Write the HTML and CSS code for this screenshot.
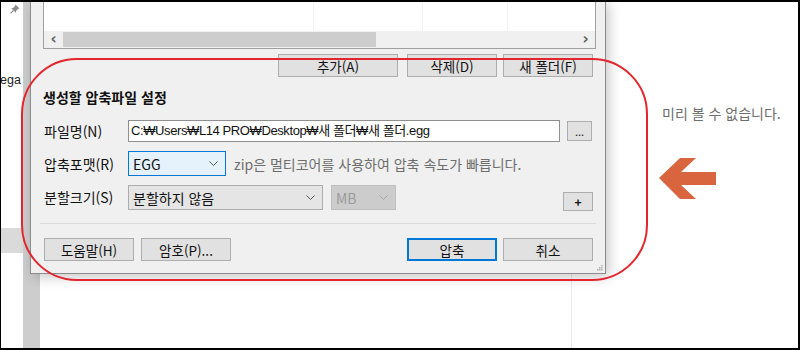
FILE: index.html
```html
<!DOCTYPE html>
<html lang="ko">
<head>
    <meta charset="UTF-8">
    <meta name="viewport" content="width=device-width, initial-scale=1.0">
    <title>압축파일 설정</title>
    <link rel="stylesheet" href="styles.css">
</head>
<body>
    <div class="screen">
        <div class="explorer">
            <div class="nav">
                <svg class="pin" width="10" height="10" viewBox="0 0 10 10">
                    <path d="M5.5 0.5 L9.5 4.5 L8 5 L6 7 L5.8 8.8 L1.2 4.2 L3 4 L5 2 Z" fill="#8a8a8a"/>
                    <path d="M3.3 6.7 L0.6 9.4" stroke="#8a8a8a" stroke-width="1.2"/>
                </svg>
                <div class="nav-item">ega</div>
                <div class="nav-sel"></div>
            </div>
            <div class="nav-scroll"></div>
            <div class="content">
                <div class="files"></div>
                <div class="preview">미리 볼 수 없습니다.</div>
            </div>
        </div>

        <div class="dialog">
            <div class="filelist">
                <div class="cols">
                    <div class="col col-name"></div>
                    <div class="col col-a"></div>
                    <div class="col col-b"></div>
                    <div class="col col-c"></div>
                </div>
                <div class="hscroll">
                    <span class="sarrow">&lsaquo;</span>
                    <div class="thumb"></div>
                    <div class="track"></div>
                    <span class="sarrow">&rsaquo;</span>
                </div>
            </div>

            <div class="list-buttons">
                <button class="btn btn-wide">추가(A)</button>
                <button class="btn">삭제(D)</button>
                <button class="btn btn-last">새 폴더(F)</button>
            </div>

            <div class="section-title">생성할 압축파일 설정</div>

            <div class="form-row row-name">
                <label class="label">파일명(N)</label>
                <div class="textbox">C:₩Users₩L14 PRO₩Desktop₩새 폴더₩새 폴더.egg</div>
                <button class="btn btn-small btn-dots">...</button>
            </div>

            <div class="form-row row-format">
                <label class="label">압축포맷(R)</label>
                <div class="combo combo-focus combo-format">
                    <span>EGG</span>
                    <svg width="9" height="5" viewBox="0 0 9 5"><polyline points="0.5,0.5 4.5,4.5 8.5,0.5" fill="none" stroke="#555" stroke-width="1"/></svg>
                </div>
                <span class="hint">zip은 멀티코어를 사용하여 압축 속도가 빠릅니다.</span>
            </div>

            <div class="form-row row-split">
                <label class="label">분할크기(S)</label>
                <div class="combo combo-split">
                    <span>분할하지 않음</span>
                    <svg width="9" height="5" viewBox="0 0 9 5"><polyline points="0.5,0.5 4.5,4.5 8.5,0.5" fill="none" stroke="#555" stroke-width="1"/></svg>
                </div>
                <div class="combo combo-disabled combo-unit">
                    <span>MB</span>
                    <svg width="9" height="5" viewBox="0 0 9 5"><polyline points="0.5,0.5 4.5,4.5 8.5,0.5" fill="none" stroke="#a8a8a8" stroke-width="1"/></svg>
                </div>
                <button class="btn btn-small btn-plus">+</button>
            </div>

            <div class="separator"></div>

            <div class="dialog-buttons">
                <button class="btn btn-help">도움말(H)</button>
                <button class="btn">암호(P)...</button>
                <div class="spacer"></div>
                <button class="btn btn-default">압축</button>
                <button class="btn btn-last">취소</button>
            </div>

            <svg class="grip" width="7" height="7" viewBox="0 0 7 7">
                <rect x="5" y="1" width="1.5" height="1.5" fill="#b0b0b0"/>
                <rect x="3" y="3" width="1.5" height="1.5" fill="#b0b0b0"/>
                <rect x="5" y="3" width="1.5" height="1.5" fill="#b0b0b0"/>
                <rect x="1" y="5" width="1.5" height="1.5" fill="#b0b0b0"/>
                <rect x="3" y="5" width="1.5" height="1.5" fill="#b0b0b0"/>
                <rect x="5" y="5" width="1.5" height="1.5" fill="#b0b0b0"/>
            </svg>
        </div>

        <div class="callout"></div>
        <svg class="arrow" width="64" height="48" viewBox="0 0 64 48">
            <polygon points="4,23 25,3 41,3 26,17 61,17 61,30 26,30 41,44 25,44" fill="#d9653e"/>
        </svg>

        <div class="frame"></div>
    </div>
</body>
</html>
```

FILE: styles.css
```css
body {
    margin: 0;
    font-family: "Noto Sans CJK KR", "Noto Sans", sans-serif;
    font-size: 14px;
    color: #111;
}
.screen {
    position: relative;
    width: 800px;
    height: 350px;
    overflow: hidden;
    background: #fff;
}
.frame {
    position: absolute;
    top: 0;
    left: 0;
    right: 0;
    bottom: 0;
    border-style: solid;
    border-color: #000;
    border-width: 2px 2px 2px 1px;
    pointer-events: none;
}

/* background explorer window */
.explorer {
    display: flex;
    height: 350px;
}
.nav {
    width: 23px;
    flex-shrink: 0;
}
.pin {
    display: block;
    margin: 4px 0 0 10px;
}
.nav-item {
    margin-top: 58px;
    font-family: "Liberation Sans", sans-serif;
    font-size: 12.5px;
    line-height: 16px;
    color: #222;
    white-space: nowrap;
}
.nav-sel {
    margin-top: 140px;
    height: 25px;
    background: #dadada;
}
.nav-scroll {
    width: 17px;
    flex-shrink: 0;
    background: #cdcdcd;
}
.content {
    flex: 1;
    display: flex;
}
.files {
    width: 531px;
    border-right: 1px solid #ececec;
}
.preview {
    padding: 105px 0 0 90px;
    line-height: 16px;
    color: #6d6d6d;
    white-space: nowrap;
}

/* dialog */
.dialog {
    position: absolute;
    left: 30px;
    top: 0;
    width: 576px;
    height: 274px;
    box-sizing: border-box;
    padding: 0 9px 0 12px;
    background: #f0f0f0;
    border: 1px solid #8c8c8c;
    border-top: none;
    box-shadow: 3px 3px 12px rgba(0, 0, 0, 0.22);
}
.filelist {
    height: 49px;
    box-sizing: border-box;
    border: 1px solid #a0a0a0;
    border-top: none;
    background: #fff;
    display: flex;
    flex-direction: column;
}
.cols {
    flex: 1;
    display: flex;
}
.col {
    border-right: 1px solid #f2f2f2;
}
.col-name { width: 269px; }
.col-a { width: 108px; }
.col-b { width: 84px; }
.col-c { flex: 1; border-right: none; }
.hscroll {
    height: 17px;
    display: flex;
    align-items: center;
    background: #f0f0f0;
}
.sarrow {
    width: 19px;
    text-align: center;
    font-family: "DejaVu Sans", sans-serif;
    font-size: 15px;
    font-weight: bold;
    line-height: 17px;
    color: #606060;
}
.thumb {
    width: 313px;
    height: 15px;
    background: #cdcdcd;
}
.track {
    flex: 1;
}

.btn {
    height: 23px;
    box-sizing: border-box;
    padding: 0;
    background: #e1e1e1;
    border: 1px solid #adadad;
    font-family: inherit;
    font-size: 13.5px;
    line-height: 20px;
    color: #111;
    width: 90px;
}
.list-buttons {
    display: flex;
    justify-content: flex-end;
    gap: 6px;
    margin-top: 5px;
    padding-right: 3px;
}
.btn-wide {
    width: 120px;
    margin-right: 3px;
}

.section-title {
    margin-top: 13px;
    line-height: 14px;
    font-weight: bold;
}

.form-row {
    display: flex;
    align-items: center;
}
.label {
    width: 84px;
    padding-left: 1px;
    flex-shrink: 0;
    white-space: nowrap;
}
.row-name {
    margin-top: 16px;
    height: 22px;
    padding-right: 4px;
}
.textbox {
    width: 432px;
    height: 22px;
    box-sizing: border-box;
    border: 1px solid #8f8f8f;
    background: #fff;
    padding-left: 2px;
    font-family: "Liberation Sans", "Noto Sans CJK KR", sans-serif;
    font-size: 13px;
    letter-spacing: -0.4px;
    line-height: 20px;
    white-space: nowrap;
}
.btn-small {
    width: 25px;
    height: 20px;
    line-height: 16px;
    font-size: 11px;
}
.btn-dots {
    margin-left: 7px;
}

.combo {
    height: 25px;
    box-sizing: border-box;
    border: 1px solid #acacac;
    background: #e5e5e5;
    display: flex;
    align-items: center;
    justify-content: space-between;
    padding: 0 7px 0 4px;
    line-height: 20px;
    white-space: nowrap;
}
.combo-focus {
    border-color: #0078d7;
    background: #e5f1fb;
}
.combo-format {
    width: 98px;
}
.hint {
    margin-left: 8px;
    color: #6d6d6d;
    white-space: nowrap;
}
.row-format {
    margin-top: 9px;
}
.row-split {
    margin-top: 9px;
    height: 25px;
    align-items: flex-start;
}
.row-split .label {
    line-height: 25px;
}
.combo-split {
    width: 195px;
}
.combo-disabled {
    border-color: #bfbfbf;
    background: #cccccc;
    color: #9a9a9a;
}
.combo-unit {
    width: 65px;
    margin-left: 8px;
}
.btn-plus {
    width: 30px;
    height: 19px;
    margin-left: auto;
    margin-right: 3px;
    margin-top: 7px;
    font-size: 12px;
    font-weight: bold;
}

.separator {
    margin: 13px 0 0 -3px;
    height: 1px;
    background: #dadada;
}

.dialog-buttons {
    display: flex;
    margin-top: 14px;
    padding: 0 3px 0 1px;
    gap: 6px;
}
.btn-help {
    margin-right: 1px;
}
.spacer {
    flex: 1;
}
.btn-default {
    border: 2px solid #0078d7;
}

.grip {
    position: absolute;
    right: 2px;
    bottom: 2px;
}

/* annotation */
.callout {
    position: absolute;
    left: 21px;
    top: 58px;
    width: 627px;
    height: 223px;
    box-sizing: border-box;
    border: 2px solid #e3262d;
    border-radius: 56px;
}
.arrow {
    position: absolute;
    left: 655px;
    top: 155px;
}
```
